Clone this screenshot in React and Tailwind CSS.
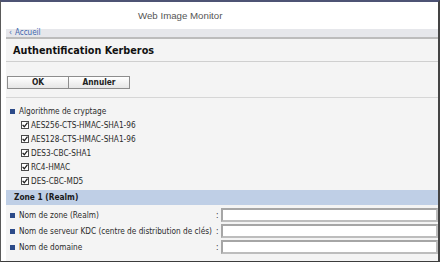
import React from 'react';

const algos = [
  'AES256-CTS-HMAC-SHA1-96',
  'AES128-CTS-HMAC-SHA1-96',
  'DES3-CBC-SHA1',
  'RC4-HMAC',
  'DES-CBC-MD5',
];

const fields = [
  'Nom de zone (Realm)',
  'Nom de serveur KDC (centre de distribution de clés)',
  'Nom de domaine',
];

const Bullet = () => <span className="block w-[5px] h-[5px] bg-[#2c4a88] shrink-0" />;

const Check = () => (
  <span className="flex items-center justify-center w-[8px] h-[8px] border border-[#4a4a4a] bg-white shrink-0">
    <svg width="6" height="6" viewBox="0 0 6 6">
      <path d="M0.6 2.9 L2.3 4.8 L5.5 0.7" stroke="#1e1e1e" strokeWidth="1.3" fill="none" />
    </svg>
  </span>
);

const App = () => {
  return (
    <div className="w-[440px] h-[262px] overflow-hidden bg-white flex flex-col border-t-2 border-t-[#4d5374] border-l border-l-[#5a5a5a] border-r-2 border-r-[#444] border-b border-b-[#3c3c3c] font-['DejaVu_Sans_Condensed','Liberation_Sans',sans-serif] text-[#2b2b2b]">
      {/* Header */}
      <div className="h-[27px] flex items-center pl-[137px] pt-[2px] font-['Liberation_Sans',sans-serif] text-[9.7px] text-[#555]">
        Web Image Monitor
      </div>

      <div className="flex-1 flex flex-col pl-[5px]">
        {/* Breadcrumb */}
        <div className="h-[8px] bg-[#e6e7eb] flex items-center pl-[3px] text-[8px] leading-none text-[#3d66ae]">
          <span className="text-[8px] mr-[3px]">‹</span>Accueil
        </div>
        <div className="h-[2px] bg-[#bcbcbc]" />

        {/* Content */}
        <div className="flex-1 bg-[#f4f4f4] flex flex-col">
          <div className="h-[23px] flex items-center pt-[3px] pl-[7px] border-b border-[#cfcfcf]">
            <h1 className="font-['DejaVu_Sans',sans-serif] font-bold text-[9.7px] text-[#111]">
              Authentification Kerberos
            </h1>
          </div>

          <div className="flex mt-[14px] ml-[1px]">
            <button className="w-[62px] h-[13px] border border-[#8d8d8d] bg-linear-to-b from-white to-[#e6e6e6] text-[8.3px] font-bold leading-none text-[#222]">
              OK
            </button>
            <button className="-ml-px w-[62px] h-[13px] border border-[#8d8d8d] bg-linear-to-b from-white to-[#e6e6e6] text-[8.3px] font-bold leading-none text-[#222]">
              Annuler
            </button>
          </div>

          <div className="mt-[8px] h-px bg-[#d6d6d6]" />

          <div className="mt-[6px] flex flex-col">
            <div className="h-[14px] flex items-center pl-[4px] gap-[4px] text-[8.2px]">
              <Bullet />
              <span>Algorithme de cryptage</span>
            </div>
            {algos.map((a) => (
              <div key={a} className="h-[14px] flex items-center pl-[15px] gap-[2px] text-[8.2px]">
                <Check />
                <span>{a}</span>
              </div>
            ))}
          </div>

          <div className="mt-[2px] h-[15px] bg-[#bfcfe6] flex items-center pl-[8px] text-[8.3px] font-bold text-[#1a1a1a]">
            Zone 1 (Realm)
          </div>

          <div className="mt-[2px] flex flex-col">
            {fields.map((f) => (
              <div key={f} className="h-[16px] flex items-center text-[8.2px]">
                <span className="ml-[4px]"><Bullet /></span>
                <span className="ml-[4px] w-[196px] whitespace-nowrap">{f}</span>
                <span className="w-[5px] pl-[1px]">:</span>
                <span className="ml-[1px] flex-1 h-[14px] bg-white border-2 border-[#bdbdbd] border-t-[#a6a6a6] border-l-[#a6a6a6]" />
              </div>
            ))}
          </div>
        </div>
      </div>
    </div>
  );
};

export default App;
